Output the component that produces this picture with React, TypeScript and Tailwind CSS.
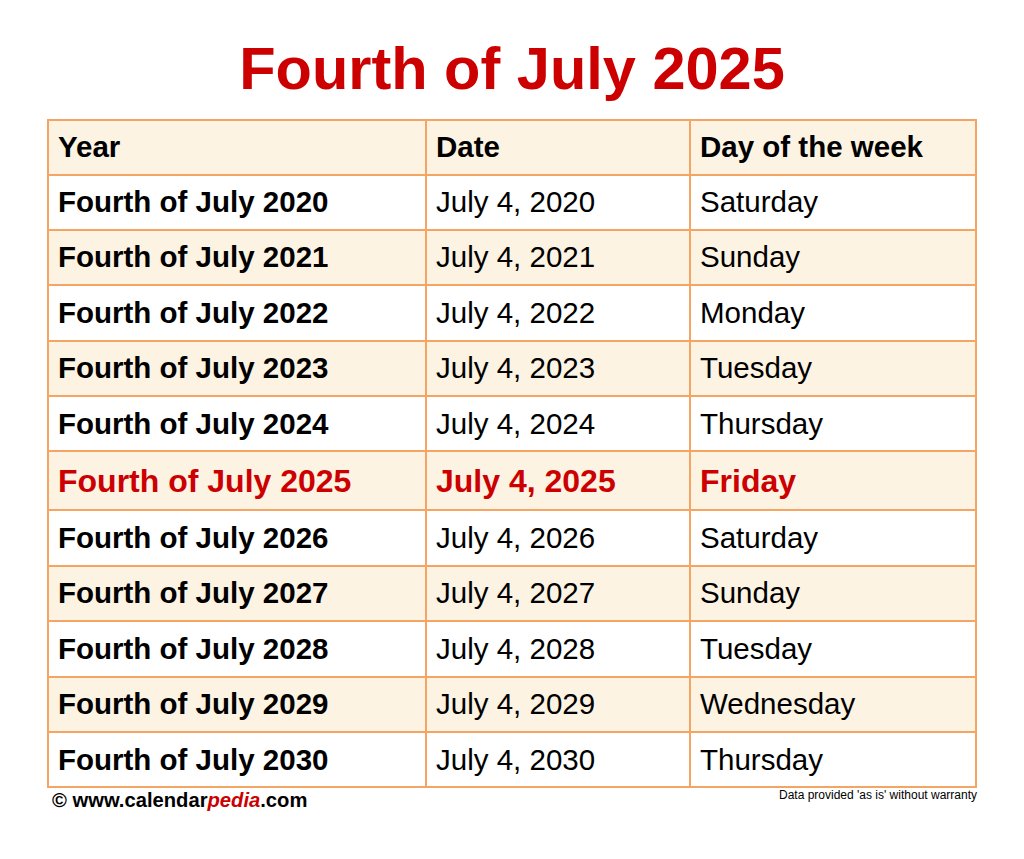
const rows = [
  { year: "2020", day: "Saturday" },
  { year: "2021", day: "Sunday" },
  { year: "2022", day: "Monday" },
  { year: "2023", day: "Tuesday" },
  { year: "2024", day: "Thursday" },
  { year: "2025", day: "Friday" },
  { year: "2026", day: "Saturday" },
  { year: "2027", day: "Sunday" },
  { year: "2028", day: "Tuesday" },
  { year: "2029", day: "Wednesday" },
  { year: "2030", day: "Thursday" },
];

export default function App() {
  return (
    <div className="w-[1024px] h-[859px] bg-white font-['Liberation_Sans',Arial,sans-serif] text-black">
      {/* Title */}
      <h1 className="pt-[39px] text-center text-[59.5px] leading-none font-bold text-[#cc0000]">
        Fourth of July 2025
      </h1>

      <div className="mx-auto mt-[20px] w-[930px]">
        <table className="w-full border-collapse border-2 border-[#f5a563] text-[29.5px]">
          <thead>
            <tr className="h-[55px] bg-[#fdf3e3]">
              <th className="w-[378px] border-2 border-[#f5a563] pl-[9px] text-left font-bold">Year</th>
              <th className="w-[264px] border-2 border-[#f5a563] pl-[9px] text-left font-bold">Date</th>
              <th className="border-2 border-[#f5a563] pl-[9px] text-left font-bold">Day of the week</th>
            </tr>
          </thead>
          <tbody>
            {rows.map((r, i) => {
              const current = r.year === "2025";
              const bg = i % 2 === 1 ? "bg-[#fdf3e3]" : "bg-white";
              return (
                <tr
                  key={r.year}
                  className={`${bg} ${current ? "h-[59px] text-[32px] font-bold text-[#cc0000]" : "h-[55.4px]"}`}
                >
                  <td className="border-2 border-[#f5a563] pl-[9px] font-bold">Fourth of July {r.year}</td>
                  <td className="border-2 border-[#f5a563] pl-[9px]">July 4, {r.year}</td>
                  <td className="border-2 border-[#f5a563] pl-[9px]">{r.day}</td>
                </tr>
              );
            })}
          </tbody>
        </table>

        {/* Footer */}
        <div className="flex items-start justify-between">
          <div className="ml-[5px] text-[20.2px] font-bold leading-tight">
            © www.calendar<span className="italic text-[#cc0000]">pedia</span>.com
          </div>
          <div className="text-[12px] leading-tight">Data provided 'as is' without warranty</div>
        </div>
      </div>
    </div>
  );
}
